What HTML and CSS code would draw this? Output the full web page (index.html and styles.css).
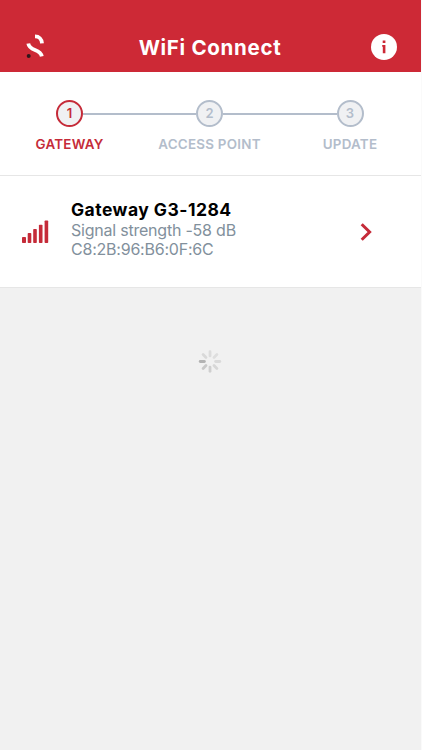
FILE: index.html
```html
<!DOCTYPE html>
<html lang="en">
    <head>
        <meta charset="utf-8">
        <meta name="viewport" content="width=device-width, initial-scale=1">
        <link rel="stylesheet" href="styles.css">
        <title>WiFi Connect</title>
    </head>
    <body>
        <div class="app">
            <header class="header">
                <svg class="logo" width="18" height="24" viewBox="0 0 18 24">
                    <path d="M9 2.4C13 2.4 15.8 5 16 9.4" fill="none" stroke="#fff" stroke-width="3.8"/>
                    <path d="M2.3 9.4C3.5 17.8 14.4 14 15.8 22.4" fill="none" stroke="#fff" stroke-width="3.8"/>
                    <circle cx="2.7" cy="22" r="2" fill="#30161b"/>
                </svg>
                <h1 class="title">WiFi Connect</h1>
                <svg class="info" width="26" height="26" viewBox="0 0 26 26">
                    <circle cx="13" cy="13" r="13" fill="#fff"/>
                    <path d="M11.7 6.4h2.7v2.5h-2.7zM11.2 10.9h3.2v8.4h-2.6v-6.6h-.6z" fill="#cd2936"/>
                </svg>
            </header>
            <ol class="steps">
                <li class="step active"><span class="number">1</span><span class="label">GATEWAY</span></li>
                <li class="step"><span class="number">2</span><span class="label">ACCESS POINT</span></li>
                <li class="step"><span class="number">3</span><span class="label">UPDATE</span></li>
            </ol>
            <div class="gateway">
                <svg class="signal" width="27" height="23" viewBox="0 0 27 23" fill="#c52b39">
                    <rect x="0" y="17" width="4" height="6" rx=".8"/>
                    <rect x="5.7" y="13" width="3.6" height="10" rx=".8"/>
                    <rect x="11.2" y="9" width="3.6" height="14" rx=".8"/>
                    <rect x="16.9" y="4.7" width="3.6" height="18.3" rx=".8"/>
                    <rect x="22.6" y="0.4" width="3.6" height="22.6" rx=".8"/>
                </svg>
                <div class="details">
                    <h2 class="name">Gateway G3-1284</h2>
                    <p class="strength">Signal strength -58 dB</p>
                    <p class="mac">C8:2B:96:B6:0F:6C</p>
                </div>
                <svg class="arrow" width="12" height="18" viewBox="0 0 12 18">
                    <path d="M1.7 1.3L9.6 9L1.7 16.7" fill="none" stroke="#c52b39" stroke-width="3"/>
                </svg>
            </div>
            <svg class="spinner" width="24" height="24" viewBox="-12 -12.5 24 24" stroke-width="2.8" stroke-linecap="round">
                <path d="M0 -5.6V-9.8" stroke="#dcdcdc"/>
                <path d="M4 -4L6.9 -6.9" stroke="#dedede"/>
                <path d="M5.6 0H9.8" stroke="#dadada"/>
                <path d="M4 4L6.9 6.9" stroke="#d7d7d7"/>
                <path d="M0 5.6V9.8" stroke="#cfcfcf"/>
                <path d="M-4 4L-6.9 6.9" stroke="#c9c9c9"/>
                <path d="M-5.6 0H-9.8" stroke="#b3b3b3"/>
                <path d="M-4 -4L-6.9 -6.9" stroke="#d9d9d9"/>
            </svg>
        </div>
    </body>
</html>
```
FILE: styles.css
```css
body {
    margin: 0;
    background-color: #fafafa;
    font-family: Inter, "Liberation Sans", sans-serif;
}

.app {
    width: 421px;
    height: 750px;
    background-color: #f1f1f1;
}

.header {
    display: flex;
    align-items: center;
    justify-content: space-between;
    box-sizing: border-box;
    height: 72px;
    padding: 22px 24px 0 26px;
    background-color: #cd2936;
}

.logo {
    margin-top: -2px;
}

.title {
    margin: 2px 0 0 5px;
    color: #fff;
    font-size: 20.5px;
    font-weight: 700;
    line-height: 24px;
    letter-spacing: 0.7px;
    white-space: nowrap;
}

.steps {
    display: grid;
    grid-template-columns: 139px 141px 140px;
    box-sizing: border-box;
    height: 104px;
    margin: 0;
    padding: 28px 0 0;
    list-style: none;
    background-color: #fff;
    border-bottom: 1px solid #e6e6e6;
}

.step {
    display: grid;
    grid-template-columns: 1fr 27px 1fr;
    grid-template-rows: 27px 26px;
    align-items: center;
    align-content: start;
    color: #b3bdcb;
}

.step::before,
.step::after {
    content: "";
    grid-row: 1;
    height: 2px;
    background-color: #b3bdcb;
}

.step::before {
    grid-column: 1;
}

.step::after {
    grid-column: 3;
}

.step:first-child::before,
.step:last-child::after {
    visibility: hidden;
}

.number {
    grid-column: 2;
    grid-row: 1;
    box-sizing: border-box;
    height: 27px;
    border: 2px solid #b3bdcb;
    border-radius: 50%;
    background-color: #f0f1f3;
    font-size: 13px;
    font-weight: 600;
    line-height: 23px;
    text-align: center;
}

.label {
    grid-column: 1 / 4;
    grid-row: 2;
    margin-top: 8px;
    font-size: 13.4px;
    font-weight: 600;
    line-height: 16px;
    letter-spacing: 0.25px;
    text-align: center;
    white-space: nowrap;
}

.active {
    color: #c52b39;
}

.active .number {
    border-color: #c52b39;
}

.gateway {
    display: flex;
    align-items: center;
    box-sizing: border-box;
    height: 112px;
    padding: 0 49px 0 22px;
    background-color: #fff;
    border-bottom: 1px solid #e6e6e6;
}

.details {
    flex: 1;
    margin: -6px 0 0 22px;
}

.name {
    margin: 0;
    color: #000;
    font-size: 17.5px;
    font-weight: 700;
    line-height: 23px;
    letter-spacing: 0.47px;
}

.strength,
.mac {
    margin: 0;
    color: #82909c;
    font-size: 16px;
    line-height: 19px;
    letter-spacing: -0.22px;
}

.spinner {
    display: block;
    margin: 61px auto 0 198px;
}
```
